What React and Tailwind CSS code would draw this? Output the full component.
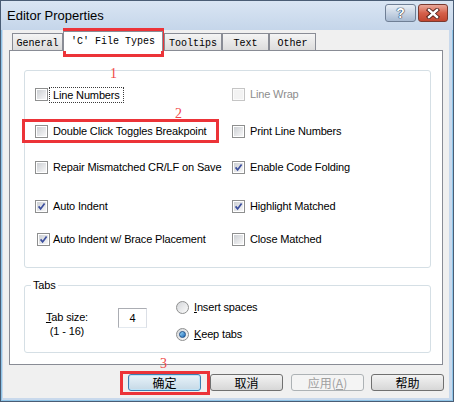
import React from "react";

const CheckBox = ({ checked = false, disabled = false, className = "" }) => (
    <span
        className={`block w-[13px] h-[13px] shrink-0 border p-[1px] ${disabled ? "border-[#c5c5c5] bg-[#fbfbfb]" : "border-[#8e8f8f] bg-white"} ${className}`}
    >
        <span
            className={`relative block w-full h-full ${disabled ? "bg-[#f3f3f3]" : "bg-linear-to-br from-[#cdd0d4] to-[#f7f7f8]"}`}
        >
            {checked && (
                <svg className="absolute left-0 top-0" width="9" height="9" viewBox="0 0 9 9">
                    <path d="M1.6 4.4 L3.6 6.9 L7.6 1.4" fill="none" stroke="#3c4f9e" strokeWidth="1.7" />
                </svg>
            )}
        </span>
    </span>
);

const Radio = ({ selected = false }) => (
    <span className="flex items-center justify-center w-[13px] h-[13px] shrink-0 rounded-full border border-[#8e8f8f] bg-linear-to-br from-[#d4d6d9] to-[#fbfbfb]">
        {selected && (
            <span className="block w-[7px] h-[7px] rounded-full border border-[#1d4f88] bg-linear-to-br from-[#9edcfb] to-[#1466b5]" />
        )}
    </span>
);

const Option = ({ label, checked, disabled, focus, shift }) => (
    <div className="flex items-center h-[13px]">
        <CheckBox checked={checked} disabled={disabled} className={shift ? "ml-[2px]" : ""} />
        {focus ? (
            <span className="ml-[1px] border border-dotted border-[#3a3a3a] px-[3px] leading-[14px]">{label}</span>
        ) : (
            <span className={`${shift ? "ml-[3px]" : "ml-[5px]"} ${disabled ? "text-[#8d8d8d]" : ""}`}>{label}</span>
        )}
    </div>
);

const Tab = ({ label, width, active }) =>
    active ? (
        <div className={`${width} h-[20px] -mb-[1px] relative z-10 bg-white border border-b-0 border-[#898c95] flex items-center justify-center pb-[1px]`}>
            {label}
        </div>
    ) : (
        <div className={`${width} h-[17px] border border-b-0 border-[#898c95] bg-linear-to-b from-[#f4f4f4] to-[#dcdcdc] flex items-center justify-center pt-[2px]`}>
            {label}
        </div>
    );

const Button = ({ children, variant, className = "" }) => {
    const look =
        variant === "default"
            ? "border-[#3c7fb1] bg-linear-to-b from-[#e8f3fa] to-[#c6d9e6] text-black shadow-[inset_0_0_0_1px_#bfe3f7]"
            : variant === "disabled"
            ? "border-[#adb2b5] bg-[#f4f4f4] text-[#a0a0a0]"
            : "border-[#707070] bg-linear-to-b from-[#f3f3f3] to-[#d7d7d7] text-black";
    return (
        <div className={`w-[73px] h-[17px] rounded-[3px] border flex items-center justify-center text-[12px] leading-none ${look} ${className}`}>
            {children}
        </div>
    );
};

export default function App() {
    return (
        <div className="relative w-[454px] h-[402px] border border-[#4a5d75] bg-[#c9d9ec] shadow-[inset_0_0_0_1px_#8fc5e8] flex flex-col font-['Liberation_Sans',Arial,sans-serif] text-[11px] tracking-[-0.15px] text-black leading-[13px]">
            {/* Title bar */}
            <div className="h-[29px] shrink-0 flex items-center pl-[6px] pr-[5px] bg-linear-to-b from-[#d9e5f3] to-[#c5d6ea]">
                <span className="text-[13px] tracking-normal leading-none text-black">Editor Properties</span>
                <div className="ml-auto self-start mt-[3px] flex gap-[2px]">
                    <div className="w-[31px] h-[18px] rounded-[3px] border border-[#6f7f95] bg-linear-to-b from-[#e9eff6] to-[#a9bbd2] flex items-center justify-center">
                        <span className="text-[14px] font-bold leading-none text-white [text-shadow:0_0_1px_#1f3049,0_0_1px_#1f3049,0_0_1px_#1f3049]">?</span>
                    </div>
                    <div className="w-[30px] h-[18px] rounded-[3px] border border-[#7a3a30] bg-linear-to-b from-[#e8a99c] via-[#d5604a] to-[#c24630] flex items-center justify-center">
                        <svg width="14" height="11" viewBox="0 0 14 11">
                            <path d="M3 2 L11 9 M11 2 L3 9" stroke="#4a1c17" strokeWidth="4.2" strokeLinecap="square" />
                            <path d="M3 2 L11 9 M11 2 L3 9" stroke="#ffffff" strokeWidth="2.4" strokeLinecap="square" />
                        </svg>
                    </div>
                </div>
            </div>

            {/* Dialog body */}
            <div className="ml-[2px] mr-[4px] mb-[3px] flex-1 bg-[#f0f0f0] pl-[6px] flex flex-col">
                {/* Tab strip */}
                <div className="h-[20px] flex items-end pl-[3px] font-['Liberation_Mono',monospace] text-[10px] tracking-normal">
                    <Tab label="General" width="w-[51px]" />
                    <Tab label="'C' File Types" width="w-[100px]" active />
                    <div className="ml-[1px]" />
                    <Tab label="Tooltips" width="w-[58px]" />
                    <Tab label="Text" width="w-[47px]" />
                    <Tab label="Other" width="w-[47px]" />
                </div>

                {/* Tab page */}
                <div className="w-[434px] h-[315px] border border-[#898c95] bg-white pt-[19px] pl-[14px]">
                    <fieldset className="w-[407px] h-[198px] border border-[#d5dfe5] rounded-[3px] pl-[10px] pt-[17px]">
                        <div className="flex">
                            <div className="w-[197px]"><Option label="Line Numbers" focus /></div>
                            <Option label="Line Wrap" disabled />
                        </div>
                        <div className="flex mt-[24px]">
                            <div className="w-[197px]"><Option label="Double Click Toggles Breakpoint" /></div>
                            <Option label="Print Line Numbers" />
                        </div>
                        <div className="flex mt-[23px]">
                            <div className="w-[197px]"><Option label="Repair Mismatched CR/LF on Save" /></div>
                            <Option label="Enable Code Folding" checked />
                        </div>
                        <div className="flex mt-[26px]">
                            <div className="w-[197px]"><Option label="Auto Indent" checked /></div>
                            <Option label="Highlight Matched" checked />
                        </div>
                        <div className="flex mt-[20px]">
                            <div className="w-[197px]"><Option label="Auto Indent w/ Brace Placement" checked shift /></div>
                            <Option label="Close Matched" />
                        </div>
                    </fieldset>

                    <fieldset className="w-[407px] mt-[10px] border border-[#d5dfe5] rounded-[3px] pb-[11px]">
                        <legend className="ml-[6px] px-[2px] leading-[14px]">Tabs</legend>
                        <div className="flex pl-[20px]">
                            <div className="w-[44px] mt-[18px] text-center leading-[14px]">
                                <div><span className="underline">T</span>ab size:</div>
                                <div>(1 - 16)</div>
                            </div>
                            <div className="ml-[29px] mt-[16px] w-[29px] h-[20px] border border-[#abadb3] border-r-[#dbdfe6] border-b-[#e3e9ef] flex items-center justify-center">
                                4
                            </div>
                            <div className="ml-[29px] pt-[9px] flex flex-col gap-[14px]">
                                <div className="flex items-center h-[13px]">
                                    <Radio />
                                    <span className="ml-[5px]"><span className="underline">I</span>nsert spaces</span>
                                </div>
                                <div className="flex items-center h-[13px]">
                                    <Radio selected />
                                    <span className="ml-[5px]"><span className="underline">K</span>eep tabs</span>
                                </div>
                            </div>
                        </div>
                    </fieldset>
                </div>

                {/* Buttons */}
                <div className="flex mt-[9px] ml-[119px] font-['Noto_Sans_CJK_SC','Noto_Sans',sans-serif] tracking-normal">
                    <Button variant="default">确定</Button>
                    <Button className="ml-[9px]">取消</Button>
                    <Button variant="disabled" className="ml-[8px]">
                        应用(<span className="underline">A</span>)
                    </Button>
                    <Button className="ml-[7px]">帮助</Button>
                </div>
            </div>

            {/* Annotations drawn over the screenshot */}
            <div className="absolute left-[62px] top-[27px] w-[101px] h-[29px] border-[3px] border-[#ec3338]" />
            <div className="absolute left-[21px] top-[118px] w-[197px] h-[24px] border-[3px] border-[#ec3338]" />
            <div className="absolute left-[119px] top-[370px] w-[90px] h-[24px] border-[3px] border-[#ec3338]" />
            <span className="absolute left-[109px] top-[65px] font-['Liberation_Serif',serif] text-[14px] leading-[16px] text-[#f04848]">1</span>
            <span className="absolute left-[174px] top-[105px] font-['Liberation_Serif',serif] text-[14px] leading-[16px] text-[#f04848]">2</span>
            <span className="absolute left-[159px] top-[355px] font-['Liberation_Serif',serif] text-[14px] leading-[16px] text-[#f04848]">3</span>
        </div>
    );
}
